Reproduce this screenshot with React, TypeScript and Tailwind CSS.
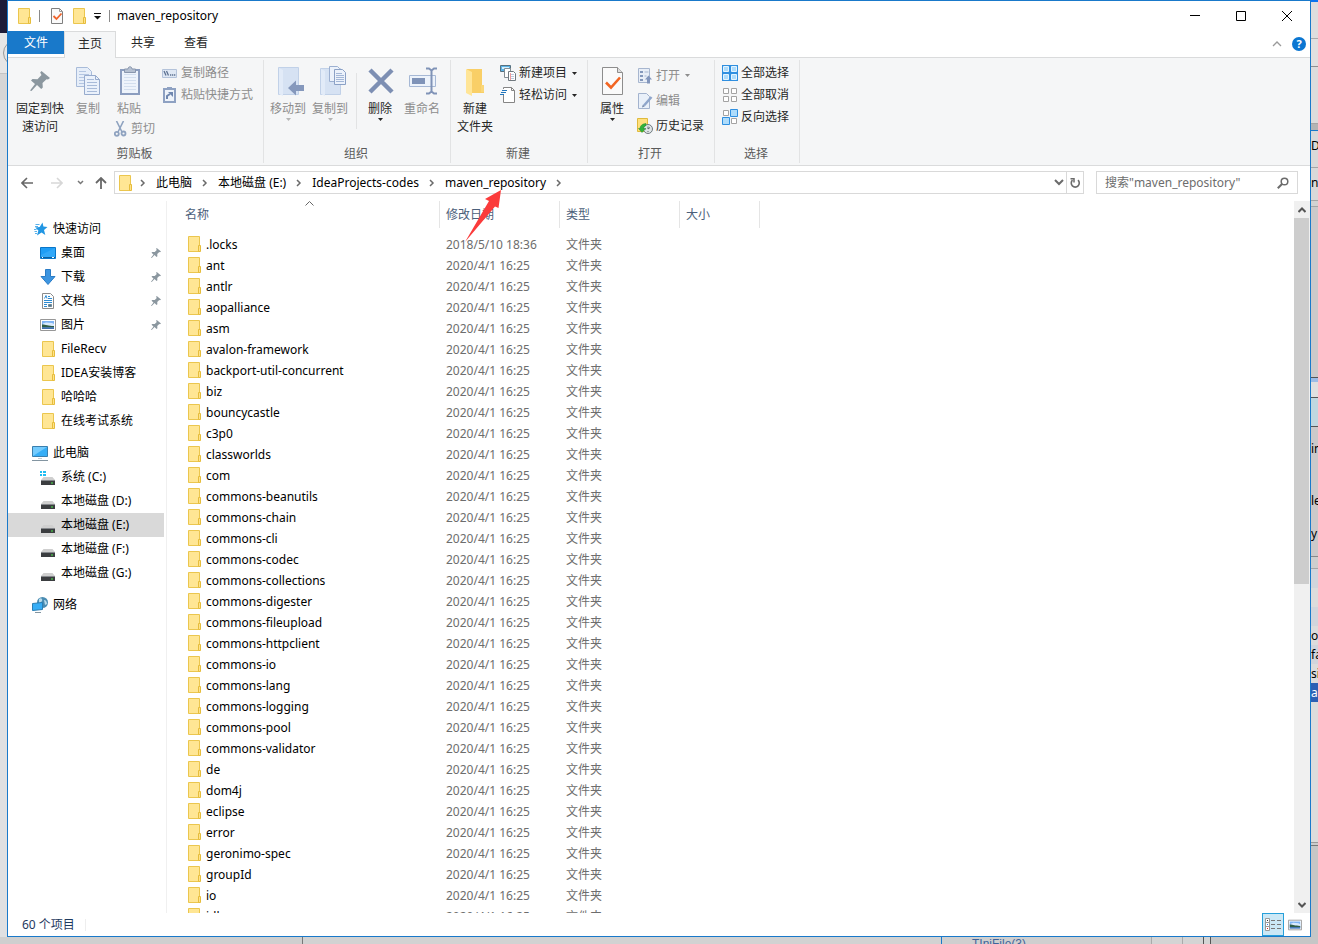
import React from "react";

type IconProps = { className?: string };

const FILES = [
  ".locks", "ant", "antlr", "aopalliance", "asm", "avalon-framework", "backport-util-concurrent",
  "biz", "bouncycastle", "c3p0", "classworlds", "com", "commons-beanutils", "commons-chain",
  "commons-cli", "commons-codec", "commons-collections", "commons-digester", "commons-fileupload",
  "commons-httpclient", "commons-io", "commons-lang", "commons-logging", "commons-pool",
  "commons-validator", "de", "dom4j", "eclipse", "error", "geronimo-spec", "groupId", "io", "jdk",
];

/* ---------- small icons, 16px grid ---------- */

function FolderIcon({ className = "" }: IconProps) {
  return (
    <svg viewBox="0 0 16 16" className={`h-4 w-4 shrink-0 ${className}`} fill="none">
      <path d="M2.5.5h11v15h-11z" fill="#ffe694" stroke="#ebc64e" />
      <path d="M12.5 9.500h2v6h-2z" fill="#ffe28a" stroke="#e6bd3c" />
    </svg>
  );
}

function CheckDocIcon({ className = "" }: IconProps) {
  return (
    <svg viewBox="0 0 16 16" className={`h-4 w-4 shrink-0 ${className}`} fill="none">
      <path d="M2.500.5h8l3 3v12h-11z" fill="#fafafa" stroke="#7f7f7f" />
      <path d="M10.500.5v3h3" stroke="#9b9b9b" />
      <path d="M4.500 8l3 3 5-5.500" stroke="#f0642b" strokeWidth="1.800" />
    </svg>
  );
}

function PinIcon({ className = "" }: IconProps) {
  return (
    <svg viewBox="0 0 20 20" className={className} fill="#8b979f">
      <path d="M11.500 0l8.500 7-2 1.500-1.500-.3-4 3.800.3 4.500-1.600 1.500-4.200-4L1.500 20 0 19.500l5-6.500-4-3.500 1.500-1.500 5 .2L11.500 4l-1.300-2.500z" />
    </svg>
  );
}

function StarIcon() {
  return (
    <svg viewBox="0 0 16 16" className="h-4 w-4 shrink-0">
      <path d="M10.500 1.500l.9 4 4.100.5-3.500 2.900 1.300 5.100-3.800-2.500-4.500 3 1.400-5L3.200 6.500l4.500-.4z" fill="#2196e3" />
      <path d="M3.500 3.500h4M3 5.500h3M4.500 8.500H2M5 10.500H2.500M5 12.500H3" stroke="#59b1ea" />
    </svg>
  );
}

function DesktopIcon() {
  return (
    <svg viewBox="0 0 16 16" className="h-4 w-4 shrink-0">
      <path d="M.5 2.500h15v11H.5z" fill="#1e9df5" stroke="#0a76c8" />
      <path d="M1 10L15 3v9H1z" fill="#45b3fb" opacity=".5" />
      <path d="M1 12.500h14" stroke="#0b5f9e" />
      <path d="M2 12.500h1M12 12.500h2" stroke="#fff" />
    </svg>
  );
}

function DownloadIcon() {
  return (
    <svg viewBox="0 0 16 16" className="h-4 w-4 shrink-0">
      <path d="M5.500.5h5v7h4.500L8 15.500 1 7.500h4.500z" fill="#3d95e0" stroke="#2a7cc6" />
    </svg>
  );
}

function DocumentIcon() {
  return (
    <svg viewBox="0 0 16 16" className="h-4 w-4 shrink-0" fill="none">
      <path d="M2.500.5h8l3 3v12h-11z" fill="#fdfdfd" stroke="#8a8a8a" />
      <path d="M4.500 5.500L6 2.500l1 3M8 3.500h2M8 5.500h4M4 7.500h8M4 9.500h8" stroke="#2d8bd2" />
      <path d="M4 11.500h3M4 13.500h3" stroke="#2d8bd2" />
      <path d="M8.500 11.500h3v2h-3z" fill="#52758f" stroke="#6f8896" />
    </svg>
  );
}

function PictureIcon({ className = "h-4 w-4" }: IconProps) {
  return (
    <svg viewBox="0 0 16 16" className={`shrink-0 ${className}`}>
      <path d="M.5 2.500h15v11H.5z" fill="#fff" stroke="#979797" />
      <path d="M2 4h12v8H2z" fill="#7fb4f5" />
      <path d="M3 6.500l3-1 6 .5 2 1v2H3z" fill="#d9eafd" />
      <path d="M2 7.500c4 0 6 1.500 12 1.500v1.500H2z" fill="#2f5d46" />
      <path d="M2 10.500h12V12H2z" fill="#3f6fae" />
    </svg>
  );
}

function ComputerIcon() {
  return (
    <svg viewBox="0 0 16 16" className="h-4 w-4 shrink-0">
      <path d="M.5 1.500h15v10H.5z" fill="#37aef6" stroke="#3a7fae" />
      <path d="M1 11L15 2H1z" fill="#74cbfd" />
      <path d="M6 13.500h4" stroke="#c3cbd0" />
      <path d="M0 15.500h16" stroke="#8395a1" />
    </svg>
  );
}

function Drive() {
  return (
    <>
      <path d="M3.500 8h9L15 11H1z" fill="#cfcfcf" />
      <path d="M1 11h14v5H1z" fill="#3b3d40" />
      <path d="M1 11.500h14" stroke="#85888c" />
      <path d="M11 14h2" stroke="#4dea4a" strokeWidth="1" />
    </>
  );
}

function DriveIcon() {
  return (
    <svg viewBox="0 0 16 16" className="h-4 w-4 shrink-0">
      <Drive />
    </svg>
  );
}

function SystemDriveIcon() {
  return (
    <svg viewBox="0 0 16 16" className="h-4 w-4 shrink-0">
      <Drive />
      <path d="M0 2h2v2H0zM3 2h3v2H3zM0 5h2v2H0zM3 5h3v2H3z" fill="#1ebdf2" />
    </svg>
  );
}

function NetworkIcon() {
  return (
    <svg viewBox="0 0 16 16" className="h-4 w-4 shrink-0">
      <circle cx="10.500" cy="5.500" r="5.500" fill="#4a8cb2" />
      <path d="M7 2c2-2 4 0 3 2s-3 1-3 3zM12 3c2 0 3 2 3 4l-2 1z" fill="#b9dcec" />
      <path d="M.5 6.500l10-1v7l-10 1z" fill="#37aef6" stroke="#2b7eb3" />
      <path d="M3 15.500h6" stroke="#8395a1" />
    </svg>
  );
}

function CopyPathIcon() {
  return (
    <svg viewBox="0 0 16 16" className="h-4 w-4 shrink-0" fill="none">
      <path d="M.5 4.500h14v8H.5z" fill="#dfe8f4" stroke="#b4c3da" />
      <path d="M2 6l2 4.500M4.500 6l2 4.500" stroke="#5d7191" strokeWidth="1.300" />
      <path d="M8 10h1.300M10 10h1.300M12 10h1.300" stroke="#5d7191" strokeWidth="1.300" />
    </svg>
  );
}

function PasteShortcutIcon() {
  return (
    <svg viewBox="0 0 16 16" className="h-4 w-4 shrink-0" fill="none">
      <path d="M2 2h11v13H2z" fill="#eef3fa" stroke="#8ea1c2" strokeWidth="2" />
      <path d="M5 0h5v3H5z" fill="#8ea1c2" />
      <path d="M5 12V9l3-2" stroke="#6f87af" strokeWidth="2" />
      <path d="M6 5h5v5z" fill="#6f87af" />
    </svg>
  );
}

function CutIcon() {
  return (
    <svg viewBox="0 0 16 16" className="h-4 w-4 shrink-0" fill="none" stroke="#8fa3c0">
      <path d="M2.500 0l5.500 11M9.500 0L4 11" strokeWidth="1.600" />
      <circle cx="2.800" cy="12.800" r="2" strokeWidth="1.800" />
      <circle cx="9.500" cy="12.500" r="2" strokeWidth="1.800" />
    </svg>
  );
}

function NewItemIcon() {
  return (
    <svg viewBox="0 0 16 16" className="h-4 w-4 shrink-0">
      <path d="M.5.5h10v6H.5z" fill="#5cb3e6" stroke="#56707f" />
      <path d="M2 2h7v2H2z" fill="#d5effc" />
      <path d="M4.500 3.500h6v9h-6z" fill="#fff" stroke="#848d93" />
      <path d="M8.500 6.500h5l2 2v7h-7z" fill="#fff" stroke="#70797f" />
      <path d="M10 9.500h4M10 11.500h4M10 13.500h4" stroke="#b9c8de" />
      <path d="M10.500 8v7" stroke="#ef9c9c" />
    </svg>
  );
}

function EasyAccessIcon() {
  return (
    <svg viewBox="0 0 16 16" className="h-4 w-4 shrink-0">
      <path d="M3.500 8v7.500h11v-12l-3-3h-8V2" fill="#fff" stroke="#858585" />
      <path d="M11.500.5v3h3" fill="none" stroke="#858585" />
      <path d="M2 3.500h5M1 5.500h5M0 7.500h4" stroke="#2377bd" />
    </svg>
  );
}

function OpenIcon() {
  return (
    <svg viewBox="0 0 16 16" className="h-4 w-4 shrink-0" fill="none">
      <path d="M1.500.5h11v14h-11z" fill="#e8eef7" stroke="#a7b6cf" />
      <path d="M3 3h3v2H3zM3 7h3v2H3zM3 11h3v2H3z" fill="#8498bb" />
      <path d="M7.500 4h4M7.500 8h2" stroke="#a7b6cf" />
      <path d="M8 11.500l3.500-4 3.500 4h-2v4h-3v-4z" fill="#8296bc" />
    </svg>
  );
}

function EditIcon() {
  return (
    <svg viewBox="0 0 16 16" className="h-4 w-4 shrink-0" fill="none">
      <path d="M1.500.5h8l3 3v12h-11z" fill="#e9f0f9" stroke="#a3b3ce" />
      <path d="M14.500 4L7 12.500" stroke="#8fa6cb" strokeWidth="2.500" />
      <path d="M5 14.500l.8-2.800 2 1.600z" fill="#6f83a6" />
    </svg>
  );
}

function HistoryIcon() {
  return (
    <svg viewBox="0 0 16 16" className="h-4 w-4 shrink-0" fill="none">
      <path d="M0.500.5h10v13h-10z" fill="#ffe07d" stroke="#dfba3c" />
      <circle cx="11" cy="11" r="4.500" fill="#dfe4e5" stroke="#707b80" />
      <path d="M11 8.500V11l2-1.500M11 13v1M8 11h1" stroke="#59646a" />
      <path d="M9 5.500c-4 .3-6 2.500-6 5H1.500l3.500 4 3.500-4H6.500c0-1.500.8-2.500 2.500-2.800z" fill="#31b23b" stroke="#1d8c2a" strokeWidth=".5" />
    </svg>
  );
}

function SelectAllIcon() {
  return (
    <svg viewBox="0 0 16 16" className="h-4 w-4 shrink-0">
      <path d="M0 0h16v16H0z" fill="#2f8fe0" />
      <path d="M1.500 1.500h5v5h-5zM9.500 1.500h5v5h-5zM1.500 9.500h5v5h-5zM9.500 9.500h5v5h-5z" fill="#aedcfb" stroke="#e3f4ff" />
    </svg>
  );
}

function SelectNoneIcon() {
  return (
    <svg viewBox="0 0 16 16" className="h-4 w-4 shrink-0">
      <path d="M1.500 1.500h5v5h-5zM9.500 1.500h5v5h-5zM1.500 9.500h5v5h-5zM9.500 9.500h5v5h-5z" fill="#fff" stroke="#a3a3a3" />
    </svg>
  );
}

function InvertIcon() {
  return (
    <svg viewBox="0 0 16 16" className="h-4 w-4 shrink-0">
      <path d="M1.500 1.500h5v5h-5zM9.500 9.500h5v5h-5z" fill="#fff" stroke="#a3a3a3" />
      <path d="M8.500.5h7v7h-7zM.5 8.500h7v7h-7z" fill="#aedcfb" stroke="#2f8fe0" />
    </svg>
  );
}

/* ---------- ribbon icons, 32px grid ---------- */

function BigIcon({ children }: { children: React.ReactNode }) {
  return (
    <svg viewBox="0 0 32 32" className="h-8 w-8 shrink-0" fill="none">
      {children}
    </svg>
  );
}

const bigPin = (
  <BigIcon>
    <path d="M17.500 5l8.500 7-2 1.500-1.500-.3-4 3.800.3 4.500-1.600 1.500-4.200-4L7.500 25 6 24.500l5-6.500-4-3.500L8.500 13l5 .2L17.500 9l-1.300-2.500z" fill="#8b979f" />
  </BigIcon>
);

const bigCopy = (
  <BigIcon>
    <path d="M4.500 1.500h11l4 4v15h-15z" fill="#e6eef9" stroke="#a8bbd9" />
    <path d="M7 5.500h7M7 8.500h10M7 11.500h10M7 14.500h10M7 17.500h10" stroke="#b4c6e2" />
    <path d="M12.500 9.500h11l4 4v15h-15z" fill="#eaf1fb" stroke="#97abcd" />
    <path d="M23.500 9.500v4h4" stroke="#97abcd" />
    <path d="M15 13.500h7M15 16.500h10M15 19.500h10M15 22.500h10M15 25.500h10" stroke="#a8bbd9" />
  </BigIcon>
);

const bigPaste = (
  <BigIcon>
    <path d="M8 4h18v24H8z" fill="#edf3fb" stroke="#8b9dbf" strokeWidth="2" />
    <path d="M11 8.500h12M11 11.500h12M11 14.500h12M11 17.500h12M11 20.500h12M11 23.500h12" stroke="#d2deee" />
    <path d="M11.500 3h3.500c0-3 4-3 4 0h3.500v3.500h-11z" fill="#b5c0d1" stroke="#8896ad" />
  </BigIcon>
);

const bigMove = (
  <BigIcon>
    <path d="M6.500 1.500h20v27h-20z" fill="#d6e2f3" stroke="#c1d1e8" />
    <path d="M7 2l4 2v26l-4-2z" fill="#e2ebf8" />
    <path d="M16 22l8-7.500v4.500h8v6h-8v4.500z" fill="#8598bc" />
  </BigIcon>
);

const bigCopyTo = (
  <BigIcon>
    <path d="M6.500 2.500h20v26h-20z" fill="#d6e2f3" stroke="#c1d1e8" />
    <path d="M7 3l4 2v25l-4-2z" fill="#e2ebf8" />
    <path d="M15.500.5h8l2 2v13h-10z" fill="#ecf2fb" stroke="#9cb0d1" />
    <path d="M20.500 3.500h8l3 3v12h-11z" fill="#ecf2fb" stroke="#8ba1c6" />
    <path d="M22 7.500h6M22 9.500h8M22 11.500h8M22 13.500h8M22 15.500h8" stroke="#a3b7d7" />
  </BigIcon>
);

const bigDelete = (
  <BigIcon>
    <path d="M6 4l22 22M28 4L6 26" stroke="#7d8fb3" strokeWidth="4.500" />
  </BigIcon>
);

const bigRename = (
  <BigIcon>
    <path d="M3.500 9.500h26v11h-26z" fill="#edf3fb" stroke="#a6b8d5" />
    <path d="M6 12h13v6H6z" fill="#7f93b8" />
    <path d="M20 2.500h3l2.500 2 2.500-2h3M25.500 4v22M20 27.500h3l2.500-2 2.500 2h3" stroke="#8093b7" strokeWidth="2" />
  </BigIcon>
);

const bigNewFolder = (
  <BigIcon>
    <path d="M8 3h15v16l2 2v6H10z" fill="#f9cf67" />
    <path d="M7 3l6 3v24l-6-3z" fill="#ffe597" />
    <path d="M22 19h3v7h-3z" fill="#fad779" />
  </BigIcon>
);

const bigProperties = (
  <BigIcon>
    <path d="M6.500 1.500h15l5 5v22h-20z" fill="#fafafa" stroke="#8d8d8d" />
    <path d="M21.500 1.500v5h5" fill="#ddd" stroke="#8d8d8d" />
    <path d="M10 16.500l5 5 9-10" stroke="#f26522" strokeWidth="2.600" />
  </BigIcon>
);

function Caret({ className = "" }: IconProps) {
  return (
    <svg viewBox="0 0 5 3" className={`h-[3px] w-[5px] shrink-0 ${className}`} fill="currentColor">
      <path d="M0 0h5L2.500 3z" />
    </svg>
  );
}

function ChevronRight() {
  return (
    <svg viewBox="0 0 26 8" className="h-2 w-[26px] shrink-0" fill="none">
      <path d="M11 1l3 3-3 3" stroke="#6b6b6b" strokeWidth="1.500" />
    </svg>
  );
}

/* ---------- ribbon ---------- */

type BigButtonProps = { icon: React.ReactNode; lines: string[]; width: string; disabled?: boolean; caret?: boolean };

function BigButton({ icon, lines, width, disabled, caret }: BigButtonProps) {
  return (
    <button disabled={disabled} className={`flex shrink-0 flex-col items-center ${width} ${disabled ? "text-[#8d8d8d]" : "text-[#262626]"}`}>
      <span className="h-[34px]">{icon}</span>
      {lines.map((line) => (
        <span key={line} className="whitespace-nowrap leading-[18px]">{line}</span>
      ))}
      {caret && <Caret className={disabled ? "text-[#b5b5b5]" : ""} />}
    </button>
  );
}

type SmallButtonProps = { icon: React.ReactNode; label: string; disabled?: boolean; caret?: boolean; height?: string };

function SmallButton({ icon, label, disabled, caret, height = "h-[22px]" }: SmallButtonProps) {
  return (
    <button disabled={disabled} className={`flex items-center gap-[3px] whitespace-nowrap ${height} ${disabled ? "text-[#8d8d8d]" : "text-[#262626]"}`}>
      {icon}
      <span>{label}</span>
      {caret && <Caret className="ml-[2px]" />}
    </button>
  );
}

function Group({ label, width, children }: { label: string; width: string; children: React.ReactNode }) {
  return (
    <section aria-label={label} className={`flex shrink-0 flex-col justify-between border-r border-[#e2e3e4] ${width}`}>
      <div className="flex">{children}</div>
      <p className="pr-[2px] text-center leading-[18px] text-[#5a5a5a]">{label}</p>
    </section>
  );
}

function Ribbon() {
  return (
    <div className="flex h-[108px] shrink-0 overflow-hidden border-b border-[#dadbdc] bg-[#f5f6f7] pt-[2px] pb-[2px]">
      <Group label="剪贴板" width="w-[256px]">
        <div className="flex pt-[6px]">
          <BigButton icon={bigPin} lines={["固定到快", "速访问"]} width="w-16" />
          <BigButton icon={bigCopy} lines={["复制"]} width="w-8" disabled />
          <div className="w-[50px] pl-1">
            <BigButton icon={bigPaste} lines={["粘贴"]} width="w-[42px]" disabled />
            <div className="pl-[6px]">
              <button disabled className="flex h-[22px] items-center gap-px whitespace-nowrap text-[#8d8d8d]">
                <CutIcon />
                <span>剪切</span>
              </button>
            </div>
          </div>
        </div>
        <div className="flex flex-col items-start pt-[2px] pl-2">
          <SmallButton icon={<CopyPathIcon />} label="复制路径" disabled />
          <SmallButton icon={<PasteShortcutIcon />} label="粘贴快捷方式" disabled />
        </div>
      </Group>
      <Group label="组织" width="w-[187px]">
        <div className="flex pt-[6px] pl-[3px]">
          <BigButton icon={bigMove} lines={["移动到"]} width="w-[42px]" disabled caret />
          <BigButton icon={bigCopyTo} lines={["复制到"]} width="w-[42px]" disabled caret />
          <div className="mt-[7px] mr-[3px] ml-[5px] h-[56px] w-px bg-[#e2e3e4]" />
          <BigButton icon={bigDelete} lines={["删除"]} width="w-10" caret />
          <BigButton icon={bigRename} lines={["重命名"]} width="w-11" disabled />
        </div>
      </Group>
      <Group label="新建" width="w-[137px]">
        <div className="flex pt-[6px]">
          <BigButton icon={bigNewFolder} lines={["新建", "文件夹"]} width="w-12" />
        </div>
        <div className="flex flex-col items-start pt-[2px] pl-[1px]">
          <SmallButton icon={<NewItemIcon />} label="新建项目" caret />
          <SmallButton icon={<EasyAccessIcon />} label="轻松访问" caret />
        </div>
      </Group>
      <Group label="打开" width="w-[127px]">
        <div className="flex pt-[6px]">
          <BigButton icon={bigProperties} lines={["属性"]} width="w-12" caret />
        </div>
        <div className="flex flex-col items-start pt-[3px] pl-[1px]">
          <SmallButton icon={<OpenIcon />} label="打开" height="h-[25px]" disabled caret />
          <SmallButton icon={<EditIcon />} label="编辑" height="h-[25px]" disabled />
          <SmallButton icon={<HistoryIcon />} label="历史记录" height="h-[25px]" />
        </div>
      </Group>
      <Group label="选择" width="w-[85px]">
        <div className="flex flex-col items-start pt-[2px] pl-[7px]">
          <SmallButton icon={<SelectAllIcon />} label="全部选择" />
          <SmallButton icon={<SelectNoneIcon />} label="全部取消" />
          <SmallButton icon={<InvertIcon />} label="反向选择" />
        </div>
      </Group>
    </div>
  );
}

/* ---------- window chrome ---------- */

function TitleBar() {
  return (
    <header className="flex h-[30px] shrink-0 items-center">
      <FolderIcon className="ml-2" />
      <span className="ml-[7px] h-3 w-px bg-[#8a8a8a]" />
      <button aria-label="属性" className="ml-[9px]"><CheckDocIcon /></button>
      <button aria-label="新建文件夹" className="ml-[6px]"><FolderIcon /></button>
      <button aria-label="自定义快速访问工具栏" className="ml-[7px]">
        <svg viewBox="0 0 7 7" className="h-[7px] w-[7px]">
          <path d="M0 .5h7" stroke="#111" />
          <path d="M0 3h7L3.500 6.500z" fill="#111" />
        </svg>
      </button>
      <span className="ml-2 h-3 w-px bg-[#8a8a8a]" />
      <h1 className="ml-[7px] flex-1">maven_repository</h1>
      <button aria-label="最小化" className="flex h-full w-[46px] items-center justify-center">
        <svg viewBox="0 0 10 10" className="h-[10px] w-[10px]"><path d="M0 4.500h10" stroke="#000" /></svg>
      </button>
      <button aria-label="最大化" className="flex h-full w-[46px] items-center justify-center">
        <svg viewBox="0 0 10 10" className="h-[10px] w-[10px]" fill="none"><path d="M.5.5h9v9h-9z" stroke="#000" /></svg>
      </button>
      <button aria-label="关闭" className="flex h-full w-[46px] items-center justify-center">
        <svg viewBox="0 0 10 10" className="h-[10px] w-[10px]"><path d="M0 0l10 10M10 0L0 10" stroke="#000" /></svg>
      </button>
    </header>
  );
}

function Tabs() {
  return (
    <nav className="flex h-[26px] shrink-0 text-[#262626]">
      <button className="h-[23px] w-14 bg-[#1979ca] text-white">文件</button>
      <button className="relative z-10 h-[27px] w-[52px] border-x border-t border-[#dadbdc] bg-[#f5f6f7] pb-[3px]">主页</button>
      <button className="h-[24px] w-[54px]">共享</button>
      <button className="h-[24px] w-[52px]">查看</button>
      <div className="flex h-[25px] flex-1 items-center justify-end gap-[10px] pr-1">
        <button aria-label="最小化功能区">
          <svg viewBox="0 0 10 6" className="h-[6px] w-[10px]" fill="none"><path d="M1 5l4-4 4 4" stroke="#9a9a9a" strokeWidth="1.300" /></svg>
        </button>
        <button aria-label="帮助" className="h-[14px] w-[14px] rounded-full bg-[#0b76d1] text-[11px] leading-[14px] font-bold text-white">?</button>
      </div>
    </nav>
  );
}

function AddressBar() {
  const crumbs = ["此电脑", "本地磁盘 (E:)", "IdeaProjects-codes", "maven_repository"];
  return (
    <div className="flex h-[35px] shrink-0 items-start pt-[5px] pr-3">
      <div className="flex h-[23px] w-[106px] shrink-0 items-center pl-[13px]">
        <button aria-label="后退">
          <svg viewBox="0 0 12 12" className="h-3 w-3" fill="none"><path d="M12 6H1M6 1L1 6l5 5" stroke="#686868" strokeWidth="1.600" /></svg>
        </button>
        <button aria-label="前进" disabled className="ml-[18px]">
          <svg viewBox="0 0 12 12" className="h-3 w-3" fill="none"><path d="M0 6h11M6 1l5 5-5 5" stroke="#d7d7d7" strokeWidth="1.600" /></svg>
        </button>
        <button aria-label="最近浏览的位置" className="ml-[14px]">
          <svg viewBox="0 0 7 5" className="h-[5px] w-[7px]" fill="none"><path d="M1 1l2.500 2.500L6 1" stroke="#777" strokeWidth="1.500" /></svg>
        </button>
        <button aria-label="上移" className="ml-[11px]">
          <svg viewBox="0 0 12 12" className="h-3 w-3" fill="none"><path d="M6 12V1M1 6l5-5 5 5" stroke="#686868" strokeWidth="1.800" /></svg>
        </button>
      </div>
      <div className="flex h-[23px] flex-1 items-center border border-[#d9d9d9]">
        <FolderIcon className="ml-[2px]" />
        <div className="-ml-[3px] flex flex-1 items-center">
          {crumbs.map((crumb) => (
            <React.Fragment key={crumb}>
              <ChevronRight />
              <button className="whitespace-nowrap">{crumb}</button>
            </React.Fragment>
          ))}
          <ChevronRight />
        </div>
        <button aria-label="以前的位置" className="mr-[2px]">
          <svg viewBox="0 0 10 7" className="h-[7px] w-[10px]" fill="none"><path d="M1 1l4 4 4-4" stroke="#6b6b6b" strokeWidth="2" /></svg>
        </button>
        <button aria-label="刷新" className="flex h-full w-[17px] items-center justify-center border-l border-[#d9d9d9]">
          <svg viewBox="0 0 12 12" className="h-3 w-3" fill="none">
            <path d="M3.500 3.200A4 4 0 1 0 9 3.200" stroke="#6b6b6b" strokeWidth="1.600" />
            <path d="M1.500 1.700H5V5.500" stroke="#6b6b6b" strokeWidth="1.500" />
          </svg>
        </button>
      </div>
      <label className="ml-3 flex h-[23px] w-[202px] shrink-0 items-center border border-[#d9d9d9] pr-2 pl-[8px]">
        <input aria-label="搜索" placeholder={'搜索"maven_repository"'} className="min-w-0 flex-1 outline-none placeholder:text-[#6d6d6d]" />
        <svg viewBox="0 0 12 12" className="h-3 w-3 shrink-0" fill="none" stroke="#6b6b6b">
          <circle cx="7.500" cy="4.500" r="3.300" strokeWidth="1.500" />
          <path d="M5 7L.8 11.200" strokeWidth="2" />
        </svg>
      </label>
    </div>
  );
}

/* ---------- body ---------- */

type NavItem = { label: string; icon: React.ReactNode; root?: boolean; pinned?: boolean; active?: boolean };

const NAV: NavItem[][] = [
  [
    { label: "快速访问", icon: <StarIcon />, root: true },
    { label: "桌面", icon: <DesktopIcon />, pinned: true },
    { label: "下载", icon: <DownloadIcon />, pinned: true },
    { label: "文档", icon: <DocumentIcon />, pinned: true },
    { label: "图片", icon: <PictureIcon />, pinned: true },
    { label: "FileRecv", icon: <FolderIcon /> },
    { label: "IDEA安装博客", icon: <FolderIcon /> },
    { label: "哈哈哈", icon: <FolderIcon /> },
    { label: "在线考试系统", icon: <FolderIcon /> },
  ],
  [
    { label: "此电脑", icon: <ComputerIcon />, root: true },
    { label: "系统 (C:)", icon: <SystemDriveIcon /> },
    { label: "本地磁盘 (D:)", icon: <DriveIcon /> },
    { label: "本地磁盘 (E:)", icon: <DriveIcon />, active: true },
    { label: "本地磁盘 (F:)", icon: <DriveIcon /> },
    { label: "本地磁盘 (G:)", icon: <DriveIcon /> },
  ],
  [{ label: "网络", icon: <NetworkIcon />, root: true }],
];

function Sidebar() {
  return (
    <aside className="flex w-[159px] shrink-0 flex-col gap-2 border-r border-[#f0f0f0] pt-4 pr-[2px]">
      {NAV.map((section) => (
        <ul key={section[0].label}>
          {section.map((item) => (
            <li key={item.label}>
              <a
                href="#"
                className={`flex h-6 items-center gap-[5px] pr-[3px] ${item.root ? "pl-6" : "pl-8"} ${item.active ? "bg-[#d9d9d9]" : ""}`}
              >
                {item.icon}
                <span className="flex-1 whitespace-nowrap">{item.label}</span>
                {item.pinned && <PinIcon className="h-[10px] w-[10px]" />}
              </a>
            </li>
          ))}
        </ul>
      ))}
    </aside>
  );
}

function FileTable() {
  return (
    <main className="min-w-0 flex-1 overflow-hidden">
      <table className="w-[593px] table-fixed border-separate border-spacing-0 text-left">
        <thead className="text-[#4c607a]">
          <tr className="h-[27px]">
            <th className="relative w-[273px] border-r border-[#e5e5e5] p-0 pl-[18px] font-normal">
              名称
              <svg viewBox="0 0 9 5" className="absolute top-0 left-[138px] h-[5px] w-[9px]" fill="none">
                <path d="M.5 4.500l4-4 4 4" stroke="#666" />
              </svg>
            </th>
            <th className="w-[120px] border-r border-[#e5e5e5] p-0 pl-[6px] font-normal">修改日期</th>
            <th className="w-[120px] border-r border-[#e5e5e5] p-0 pl-[6px] font-normal">类型</th>
            <th className="w-20 border-r border-[#e5e5e5] p-0 pl-[6px] font-normal">大小</th>
          </tr>
          <tr className="h-[6px]" />
        </thead>
        <tbody className="text-[#6d6d6d]">
          {FILES.map((name, i) => (
            <tr key={name} className="h-[21px]">
              <td className="p-0 pl-[19px] text-black">
                <span className="flex h-[21px] items-center gap-1">
                  <FolderIcon className="mb-px" />
                  {name}
                </span>
              </td>
              <td className="p-0 pl-[6px]">{i === 0 ? "2018/5/10 18:36" : "2020/4/1 16:25"}</td>
              <td className="p-0 pl-[6px]">文件夹</td>
              <td className="p-0" />
            </tr>
          ))}
        </tbody>
      </table>
    </main>
  );
}

function ScrollBar() {
  return (
    <div className="flex w-4 shrink-0 flex-col bg-[#f0f0f0]">
      <button aria-label="向上滚动" className="flex h-[17px] items-center justify-center">
        <svg viewBox="0 0 8 6" className="h-[6px] w-2" fill="none"><path d="M.5 5L4 1.500 7.500 5" stroke="#555" strokeWidth="2" /></svg>
      </button>
      <div className="min-h-0 flex-1">
        <div className="h-[54%] w-[15px] bg-[#cdcdcd]" />
      </div>
      <button aria-label="向下滚动" className="flex h-[17px] items-center justify-center">
        <svg viewBox="0 0 8 6" className="h-[6px] w-2" fill="none"><path d="M.5 1L4 4.500 7.500 1" stroke="#555" strokeWidth="2" /></svg>
      </button>
    </div>
  );
}

function StatusBar() {
  return (
    <footer className="flex h-[23px] shrink-0 items-center pr-2 pl-[14px] text-[#1f3a5f]">
      <span>60 个项目</span>
      <span className="ml-[10px] h-3 w-px bg-[#eee]" />
      <div className="flex h-full flex-1 items-center justify-end gap-1">
        <button aria-label="详细信息" className="flex h-[23px] w-[22px] items-center justify-center border border-[#26a0da] bg-[#cbe8f6]">
          <svg viewBox="0 0 16 13" className="h-[13px] w-4" fill="none">
            <path d="M.5.5h4v12h-4zM.5 4.500h4M.5 8.500h4" fill="#fff" stroke="#999" />
            <path d="M6 2.500h4M12 2.500h4M6 6.500h4M12 6.500h4M6 10.500h4M12 10.500h4" stroke="#777" />
            <path d="M2 2.500h1" stroke="#333" />
            <path d="M2 6.500h1" stroke="#2a7de1" />
            <path d="M2 10.500h1" stroke="#d22" />
          </svg>
        </button>
        <button aria-label="大缩略图"><PictureIcon className="h-[14px] w-[14px]" /></button>
      </div>
    </footer>
  );
}

/* ---------- windows that peek out behind ---------- */

function LeftEdge() {
  return (
    <div className="flex w-[7px] shrink-0 flex-col overflow-hidden bg-[#dfe0e2]">
      <div className="h-[33px] bg-[#1d1c38]" />
      <div className="flex h-[41px] items-center border-b border-[#c4c4c4] bg-[#e6e6e6]">
        <svg viewBox="0 0 7 26" className="h-[26px] w-[7px]" fill="none"><circle cx="16" cy="13" r="12.500" stroke="#999" /></svg>
      </div>
      <div className="h-[26px] bg-[#d6d6d6]" />
    </div>
  );
}

const RIGHT_EDGE = [
  { cls: "h-[2px] bg-[#0a74f0]" },
  { cls: "h-[37px] border-b border-[#aaa] bg-[#dedede]" },
  { cls: "h-[28px] border-b border-[#8f8f8f] bg-[#e0e0e0]" },
  { cls: "h-[57px] border-b border-[#a5a5a5] bg-[#dcdcdc]" },
  { cls: "h-[7px] border-b border-[#1979ca] bg-[#b4b4b4]" },
  { cls: "h-[37px] border-b border-[#a5a5a5] bg-[#d9d9d9] pb-[6px]", text: "D" },
  { cls: "h-[33px] border-b border-[#a5a5a5] bg-[#d9d9d9] pb-[3px]", text: "n," },
  { cls: "h-[6px] border-b border-[#a5a5a5] bg-[#d2d2d2]" },
  { cls: "h-[171px] border-b border-[#555] bg-[#cbc9ca]" },
  { cls: "h-[4px] bg-[#9dbce6]" },
  { cls: "h-[16px] border-b border-[#555] bg-[#e0e0e0]" },
  { cls: "h-[29px] border-b border-[#555] bg-[#c0d7e0]" },
  { cls: "h-[43px] bg-[#cbc9ca]", text: "in" },
  { cls: "h-[62px] bg-[#cbc9ca]", text: "le" },
  { cls: "h-[25px] border-b border-[#888] bg-[#cbc9ca] pb-[20px]", text: "y" },
  { cls: "h-[12px] border-b border-[#a5a5a5] bg-[#cecece]" },
  { cls: "h-[19px] bg-[#d1d5dc]" },
  { cls: "h-[19px] bg-[#dcdcdc]" },
  { cls: "h-[19px] bg-[#d1d5dc]" },
  { cls: "h-[19px] bg-[#dcdcdc]", text: "ou" },
  { cls: "h-[19px] bg-[#d1d5dc]", text: "fa" },
  { cls: "h-[19px] bg-[#dcdcdc]", text: "si" },
  { cls: "h-[19px] bg-[#2d5fb4] text-white", text: "a" },
  { cls: "h-[141px] border-b border-[#999] bg-[#dcdcdc]" },
  { cls: "h-[3px] border-b border-[#777] bg-[#ccc]" },
];

function RightEdge() {
  return (
    <div className="flex w-[7px] shrink-0 flex-col overflow-hidden bg-[#c6c6c6]">
      {RIGHT_EDGE.map((part, i) => (
        <div key={i} className={`flex shrink-0 items-center ${part.cls}`}>{part.text}</div>
      ))}
    </div>
  );
}

function BottomEdge() {
  return (
    <div className="flex h-[7px] shrink-0 overflow-hidden bg-[#c6c6c6]">
      <div className="w-[303px] border-r border-[#777] bg-[#cfcfcf]" />
      <div className="w-[638px] bg-[#d2d2d2]" />
      <div className="w-[211px] border-x border-[#1979ca] border-r-[#aaa] bg-[#cfcfcf] pl-[30px] font-['Liberation_Sans',sans-serif] leading-[14px] text-[#41659b]">
        TIniFile(3)
      </div>
      <div className="w-[31px] border-r border-[#aaa] bg-[#d4d4d4]" />
      <div className="w-[21px] border-r border-[#555] bg-[#d4d4d4]" />
      <div className="w-[7px] border-r border-[#555] bg-[#d4d4d4]" />
    </div>
  );
}

export default function App() {
  return (
    <div className="flex h-screen flex-col overflow-hidden font-['Noto_Sans','Noto_Sans_CJK_SC',sans-serif] text-[12px] leading-[18px] text-black">
      <div className="flex min-h-0 flex-1">
        <LeftEdge />
        <div className="relative flex min-w-0 flex-1 flex-col border border-[#1979ca] bg-white">
          <TitleBar />
          <Tabs />
          <div className="h-px shrink-0 bg-[#dadbdc]" />
          <Ribbon />
          <AddressBar />
          <div className="flex min-h-0 flex-1">
            <Sidebar />
            <FileTable />
            <ScrollBar />
          </div>
          <StatusBar />
          {/* pointer arrow drawn over the breadcrumb */}
          <svg viewBox="0 0 36 52" className="pointer-events-none absolute top-[189px] left-[457px] h-[52px] w-9">
            <path d="M36 0L20 9l4 2L0 52l30-35.500 3.500 1.500z" fill="#fb3b3b" />
          </svg>
        </div>
        <RightEdge />
      </div>
      <BottomEdge />
    </div>
  );
}
